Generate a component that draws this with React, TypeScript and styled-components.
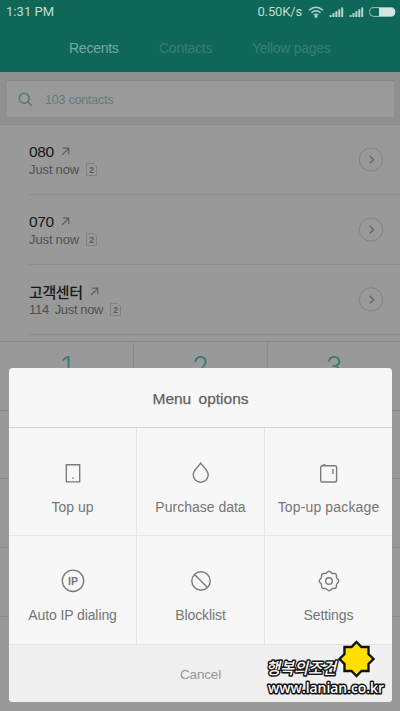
import React from "react";
import styled, { createGlobalStyle } from "styled-components";

const Global = createGlobalStyle`
  * { box-sizing: border-box; }
  body { margin: 0; background: #999; font-family: "Liberation Sans", "Noto Sans CJK KR", sans-serif; }
`;

const Screen = styled.div`
  position: relative;
  width: 400px;
  height: 711px;
  overflow: hidden;
  background: #999;
`;

const Header = styled.header`
  height: 72px;
  background: #0e6759;
`;

const StatusBar = styled.div`
  height: 24px;
  padding: 0 4px 0 6px;
  display: flex;
  align-items: center;
  font: 13px/24px Roboto, sans-serif;
  color: #c0dad4;
`;

const Clock = styled.span`
  flex: 1;
  letter-spacing: 0.05px;
`;

const Speed = styled.span`
  letter-spacing: -0.15px;
  margin-right: 1px;
`;

const StatusIcons = styled.svg`
  display: block;
  margin-left: 5px;
`;

const Tabs = styled.nav`
  height: 48px;
  display: flex;
  padding-left: 69px;
`;

const Tab = styled.span<{ $active?: boolean; $width: number; $track?: number }>`
  width: ${(p) => p.$width}px;
  white-space: nowrap;
  font-size: 14px;
  line-height: 48px;
  letter-spacing: ${(p) => p.$track ?? 0}px;
  color: ${(p) => (p.$active ? "#78aaa2" : "#387f74")};
`;

const SearchArea = styled.div`
  height: 53px;
  padding: 8px 6px 7px 7px;
  background: #8f8f8f;
  border-bottom: 1px solid #8a8a8a;
`;

const SearchBox = styled.div`
  height: 37px;
  display: flex;
  align-items: center;
  padding-left: 11px;
  background: #9a9a9a;
  border-top: 1px solid #888488;
  color: #5f7b7d;
  font-size: 12.5px;
  letter-spacing: -0.2px;
`;

const SearchHint = styled.span`
  margin-left: 12px;
  line-height: 36px;
  padding-top: 1px;
`;

const Row = styled.div`
  height: 70px;
  margin-left: 29px;
  padding: 1px 16px 0 0;
  display: flex;
  align-items: center;
  border-bottom: 1px solid #8e8e8e;
`;

const RowText = styled.div`
  flex: 1;
  padding-top: 1px;
`;

const Line = styled.div`
  display: flex;
  align-items: center;
  height: 18px;
`;

const Caller = styled.span`
  min-width: 25px;
  font-size: 15.5px;
  letter-spacing: -0.35px;
  color: #181818;
  margin-right: 7px;
`;

const CallerKo = styled(Caller)`
  font-family: "Noto Sans CJK KR", sans-serif;
  font-size: 15px;
  line-height: 18px;
  font-weight: 500;
  letter-spacing: -0.4px;
`;

const When = styled.span`
  font-size: 13px;
  letter-spacing: -0.1px;
  word-spacing: -0.4px;
  color: #505050;
  margin-right: 7px;
  white-space: pre;
`;

const CallNumber = styled(When)`
  letter-spacing: -0.3px;
`;

const Keypad = styled.div`
  margin-top: 6px;
  display: grid;
  grid-template-columns: 134px 134px 132px;
  grid-auto-rows: 68.7px;
  border-top: 1px solid #858585;
`;

const Key = styled.div<{ $divider: boolean }>`
  border-right: ${(p) => (p.$divider ? "1px solid #8b8b8b" : "none")};
  border-bottom: 1px solid #888;
  text-align: center;
  font: 300 28px/50px Inter, sans-serif;
  color: #357b70;
`;

const Dialog = styled.section`
  position: absolute;
  left: 9px;
  top: 368px;
  width: 383px;
  height: 334px;
  border-radius: 4px;
  overflow: hidden;
  background: #f7f7f7;
  box-shadow: 0 0 1px #aaa;
`;

const DialogTitle = styled.h1`
  margin: 0;
  height: 60px;
  border-bottom: 1px solid #d3d3d3;
  text-align: center;
  font-size: 15.5px;
  font-weight: 400;
  line-height: 62px;
  word-spacing: 3px;
  color: #606060;
  -webkit-text-stroke: 0.25px #606060;
`;

const Options = styled.div`
  display: grid;
  grid-template-columns: 128px 128px 127px;
  grid-template-rows: 108px 109px;
`;

const Option = styled.div<{ $divider: boolean }>`
  border-right: ${(p) => (p.$divider ? "1px solid #e6e6e6" : "none")};
  border-bottom: 1px solid #e4e4e4;
  display: flex;
  flex-direction: column;
  align-items: center;
  padding-top: 32px;
`;

const OptionIcon = styled.svg`
  display: block;
  width: 26px;
  height: 26px;
  fill: none;
  stroke: #7b7b7b;
  stroke-width: 1.4;
`;

const OptionLabel = styled.span<{ $track: number }>`
  margin-top: 12px;
  font-size: 14px;
  line-height: 18px;
  letter-spacing: ${(p) => p.$track}px;
  color: #757575;
  white-space: nowrap;
`;

const Cancel = styled.div`
  height: 57px;
  background: #f0f0f0;
  text-align: center;
  font-size: 13.5px;
  line-height: 60px;
  letter-spacing: -0.15px;
  color: #969696;
`;

const Watermark = styled.svg`
  position: absolute;
  left: 260px;
  top: 635px;
`;

const OutgoingArrow = () => (
  <svg width="9" height="9" viewBox="0 0 9 9" fill="none" stroke="#5c5c5c" strokeWidth="1.2">
    <path d="M1 8 7.7 1.3M1.8 1.2h6v6" />
  </svg>
);

const SimBadge = () => (
  <svg width="11" height="13" viewBox="0 0 11 13">
    <path d="M.5.5H8L10.5 3v9.5H.5z" fill="none" stroke="#7c7c7c" strokeWidth=".8" />
    <text x="5.5" y="9.7" textAnchor="middle" fontSize="8.5" fontWeight="700" fill="#5a5a5a">2</text>
  </svg>
);

const Details = () => (
  <svg width="26" height="26" viewBox="0 0 26 26" fill="none">
    <circle cx="13" cy="12.5" r="11.7" stroke="#828282" />
    <path d="m11.6 8.8 4 3.9-4 3.9" stroke="#686868" strokeWidth="1.4" />
  </svg>
);

const bars = [0, 1, 2, 3, 4];
const Signal = () => (
  <StatusIcons width="15" height="10" viewBox="0 0 15 10">
    {bars.map((i) => (
      <rect key={i} x={0.6 + i * 2.9} y={8 - i * 1.9} width="2" height={2 + i * 1.9} fill="#b9d4ce" />
    ))}
  </StatusIcons>
);

// Eight shallow teeth around the hub of the settings gear.
const gear = (() => {
  const pts: string[] = [];
  for (let i = 0; i < 64; i++) {
    const a = (i / 64) * Math.PI * 2;
    const r = 9 + 0.75 * Math.cos(8 * a);
    pts.push(`${(13 + r * Math.sin(a)).toFixed(2)} ${(13 - r * Math.cos(a)).toFixed(2)}`);
  }
  return `M${pts.join("L")}Z`;
})();

const star = Array.from({ length: 16 }, (_, i) => {
  const a = (i * Math.PI) / 8;
  const r = i % 2 ? 13 : 17;
  return `${96.5 + r * Math.sin(a)},${24 - r * Math.cos(a)}`;
}).join(" ");

const calls = [
  { name: "080", when: "Just now", ko: false },
  { name: "070", when: "Just now", ko: false },
  { name: "고객센터", when: "114  Just now", ko: true },
];

const options = [
  { label: "Top up", track: 0, icon: <path d="M6.3 4.7h13.4v17.2H6.3zM12.2 18.1h1.7" strokeLinejoin="round" /> },
  { label: "Purchase data", track: 0, icon: <path d="M12.7 3.2C10.5 6.8 5.2 10.2 5.2 14.8a7.5 7.5 0 0 0 15 0C20.2 10.2 14.9 6.8 12.7 3.2z" /> },
  { label: "Top-up package", track: 0.15, icon: <path d="M6.2 5.8h12.6q1.8 0 1.8 1.8v12.6q0 1.8-1.8 1.8H6.4q-1.7 0-1.7-1.8V7.3q0-1.5 1.5-1.5M6.5 4.9h3.3M16.9 9v5" /> },
  {
    label: "Auto IP dialing",
    track: -0.1,
    icon: (
      <>
        <circle cx="13" cy="12.8" r="10.7" />
        <text x="13" y="16.6" textAnchor="middle" fontSize="10.5" fontWeight="700" fill="#777" stroke="none">IP</text>
      </>
    ),
  },
  { label: "Blocklist", track: -0.1, icon: <><circle cx="13" cy="13" r="9.2" /><path d="m6.5 6.5 13 13" /></> },
  { label: "Settings", track: -0.1, icon: <><path d={gear} /><circle cx="13" cy="13" r="3.3" /></> },
];

export default function App() {
  return (
    <Screen>
      <Global />
      <Header>
        <StatusBar>
          <Clock>1:31 PM</Clock>
          <Speed>0.50K/s</Speed>
          <StatusIcons width="16" height="12" viewBox="0 0 16 12" fill="none" stroke="#b9d4ce" strokeWidth="1.4">
            <path d="M1 4.2q7-6 14 0M3.4 6.7q4.6-3.8 9.2 0M5.7 9q2.3-1.8 4.6 0" />
            <circle cx="8" cy="10.5" r=".7" fill="#b9d4ce" />
          </StatusIcons>
          <Signal />
          <Signal />
          <StatusIcons width="27" height="10" viewBox="0 0 27 10">
            <rect x=".6" y=".6" width="25.4" height="8.8" rx="4" fill="none" stroke="#a3c5be" />
            <path d="M10 1h13q3 0 3 4t-3 4H10z" fill="#d2e5e0" />
          </StatusIcons>
        </StatusBar>
        <Tabs>
          <Tab $active $width={90} $track={-0.25}>Recents</Tab>
          <Tab $width={93} $track={-0.25}>Contacts</Tab>
          <Tab $width={80} $track={-0.3}>Yellow pages</Tab>
        </Tabs>
      </Header>
      <SearchArea>
        <SearchBox>
          <svg width="15" height="15" viewBox="0 0 15 15" fill="none" stroke="#55777a" strokeWidth="1.5">
            <circle cx="6.2" cy="6.2" r="5" />
            <path d="m9.8 9.8 4 4" />
          </svg>
          <SearchHint>103 contacts</SearchHint>
        </SearchBox>
      </SearchArea>
      {calls.map((call) => (
        <Row key={call.name}>
          <RowText>
            <Line>
              {call.ko ? <CallerKo>{call.name}</CallerKo> : <Caller>{call.name}</Caller>}
              <OutgoingArrow />
            </Line>
            <Line>
              {call.ko ? <CallNumber>{call.when}</CallNumber> : <When>{call.when}</When>}
              <SimBadge />
            </Line>
          </RowText>
          <Details />
        </Row>
      ))}
      <Keypad>
        {["1", "2", "3", "4", "5", "6", "7", "8", "9", "*", "0", "#"].map((k, i) => (
          <Key key={k} $divider={i % 3 < 2}>{k}</Key>
        ))}
      </Keypad>
      <Dialog>
        <DialogTitle>Menu options</DialogTitle>
        <Options>
          {options.map((o, i) => (
            <Option key={o.label} $divider={i % 3 < 2}>
              <OptionIcon viewBox="0 0 26 26">{o.icon}</OptionIcon>
              <OptionLabel $track={o.track}>{o.label}</OptionLabel>
            </Option>
          ))}
        </Options>
        <Cancel>Cancel</Cancel>
      </Dialog>
      <Watermark width="130" height="70" viewBox="0 0 130 70">
        <polygon points={star} fill="#ffde00" stroke="#111" strokeWidth="2.4" />
        <g fill="#fff" stroke="#111" strokeWidth="3" paintOrder="stroke" strokeLinejoin="round">
          <text x="6" y="39" fontFamily="Noto Sans CJK KR" fontSize="16" fontWeight="500" fontStyle="italic" textLength="70" lengthAdjust="spacingAndGlyphs">행복의조건</text>
          <text x="8" y="58" fontFamily="Open Sans" fontSize="15" fontWeight="600" textLength="116" lengthAdjust="spacingAndGlyphs">www.lanian.co.kr</text>
        </g>
      </Watermark>
    </Screen>
  );
}
